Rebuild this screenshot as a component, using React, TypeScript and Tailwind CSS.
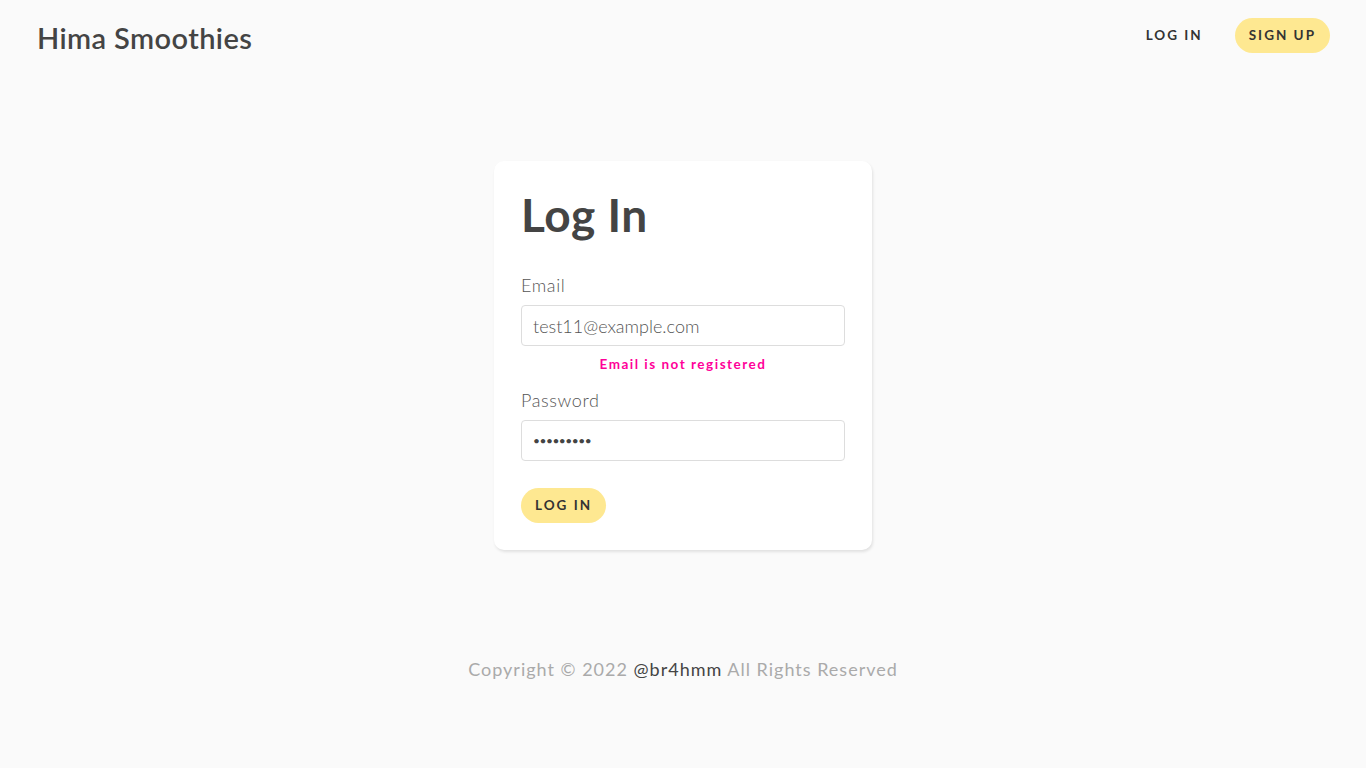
import React from 'react';

const font = { fontFamily: 'Lato, "Noto Sans", sans-serif' };

export default function App() {
  return (
    <div className="min-h-screen bg-[#fafafa] text-[#333]" style={font}>
      {/* Nav */}
      <nav className="flex items-center justify-between h-[71px] pl-[37px] pr-[36px]">
        <h1 className="pt-[3px] text-[29px] font-semibold text-[#444] tracking-[0.4px] leading-none">Hima Smoothies</h1>
        <ul className="flex items-center">
          <li>
            <a href="#" className="block px-4 py-[10px] text-[13.5px] font-bold uppercase tracking-[2px] text-[#333]">Log in</a>
          </li>
          <li>
            <a href="#" className="block ml-[16px] h-[35px] px-[14px] rounded-full bg-[#fee891] text-[13.5px] font-bold uppercase tracking-[2px] text-[#333] leading-[35px]">Sign up</a>
          </li>
        </ul>
      </nav>

      {/* Login form */}
      <form className="mt-[90px] mx-auto w-[378px] bg-white rounded-[10px] px-[27px] pt-[27px] pb-[27px] shadow-[1px_2px_3px_rgba(0,0,0,0.1)]">
        <h2 className="text-[46px] font-bold text-[#444] leading-[54px] tracking-[0.5px]">Log In</h2>

        <label className="block mt-[32px] mb-[9px] text-[18px] text-[#555] font-light tracking-[0.6px] leading-[22px]">Email</label>
        <input
          type="text"
          defaultValue="test11@example.com"
          className="block w-full h-[41px] px-[11px] border border-[#ddd] rounded-[4px] text-[18px] text-[#555] font-light outline-none"
        />
        <div className="mt-[9px] text-center text-[13.5px] font-bold text-[#ff0099] tracking-[1.5px] leading-[18px]">Email is not registered</div>

        <label className="block mt-[16px] mb-[9px] text-[18px] text-[#555] font-light tracking-[0.6px] leading-[22px]">Password</label>
        <input
          type="password"
          defaultValue="123456789"
          className="block w-full h-[41px] px-[11px] border border-[#ddd] rounded-[4px] text-[12px] text-[#444] tracking-[-0.5px] outline-none"
        />

        <button type="button" className="block mt-[27px] h-[35px] px-[14px] rounded-full bg-[#fee891] text-[13.5px] font-bold uppercase tracking-[2px] text-[#333]">Log in</button>
      </form>

      {/* Footer */}
      <footer className="mt-[108px] text-center text-[18px] text-[#aaa] tracking-[1px] leading-[22px]">
        Copyright © 2022 <a href="#" className="text-[#444]">@br4hmm</a> All Rights Reserved
      </footer>
    </div>
  );
}
